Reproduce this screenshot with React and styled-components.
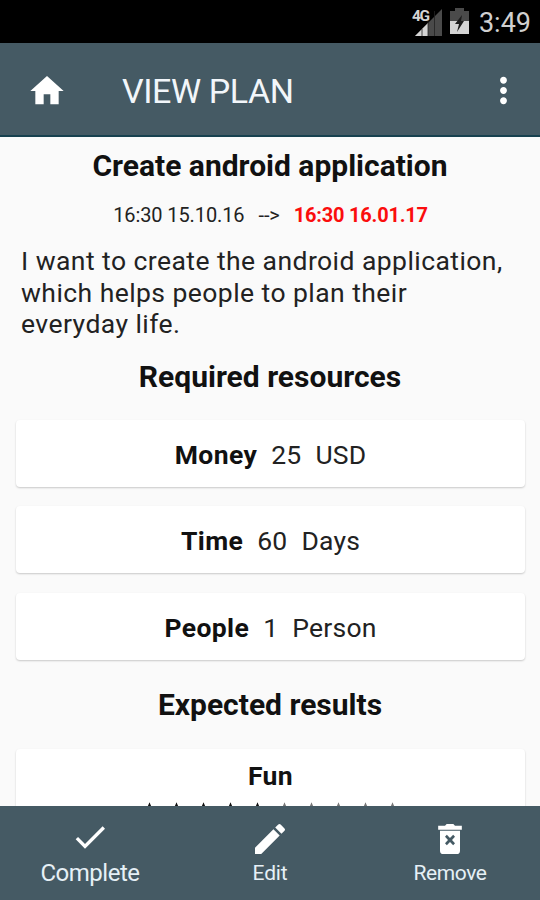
import React, { Component } from "react";
import styled, { createGlobalStyle } from "styled-components";
import {
  MdHome,
  MdMoreVert,
  MdCheck,
  MdEdit,
  MdStar
} from "react-icons/md";

const resources = [
  { name: "Money", amount: 25, unit: "USD" },
  { name: "Time", amount: 60, unit: "Days" },
  { name: "People", amount: 1, unit: "Person" }
];

const RATING = 5;
const MAX_RATING = 10;

class StatusBar extends Component {
  render() {
    return (
      <StatusContainer>
        <svg width="32" height="30" viewBox="-2 -2 32 30">
          <path d="M30 0V27H3z" fill="#4a4a4a" />
          <path d="M16 14V27H3z" fill="#d4d4d4" />
          <path d="M10 20V27M16 2V27M22.5 2V27" stroke="#222" strokeWidth="0.8" />
          <path d="M0 0h17v9L12 13H0z" fill="#000" />
          <text x="0" y="12" fill="#d4d4d4" fontSize="15.5" fontWeight="700" letterSpacing="-1.5">
            4G
          </text>
        </svg>
        <svg width="19" height="27" viewBox="0 0 19 27">
          <path d="M5 0h9v3h5v10H0V3h5z" fill="#4a4a4a" />
          <path d="M0 13h19v13H0z" fill="#d4d4d4" />
          <path d="M12 7L5 16h4l-2 8 7-11h-3z" fill="#1c1c1c" />
        </svg>
        <Clock>3:49</Clock>
      </StatusContainer>
    );
  }
}

class BottomBar extends Component {
  render() {
    return (
      <BottomContainer>
        <Action>
          <CheckIcon size={40} />
          <ActionLabel size={24} spacing={-0.5}>Complete</ActionLabel>
        </Action>
        <Action>
          <MdEdit size={40} />
          <ActionLabel size={21} spacing={-0.2}>Edit</ActionLabel>
        </Action>
        <Action>
          <svg width="40" height="40" viewBox="0 0 24 24" fill="currentColor">
            <path d="M4.9 4H9l1-1h4l1 1h4.1v2.4H4.9z" />
            <path
              fillRule="evenodd"
              d="M6 7h12v12a2 2 0 0 1-2 2H8a2 2 0 0 1-2-2zM9 10.6l1.8 2L9 14.6l1.1 1.1 1.9-1.9 1.9 1.9 1.1-1.1-1.8-2 1.8-2-1.1-1.1-1.9 1.9-1.9-1.9z"
            />
          </svg>
          <ActionLabel size={21} spacing={-0.4}>Remove</ActionLabel>
        </Action>
      </BottomContainer>
    );
  }
}

class App extends Component {
  render() {
    return (
      <Screen>
        <GlobalStyle />
        <StatusBar />
        <Header>
          <MdHome size={40} />
          <HeaderTitle>VIEW PLAN</HeaderTitle>
          <MdMoreVert size={41} />
        </Header>
        <Content>
          <Title>Create android application</Title>
          <Dates>
            <span>16:30 15.10.16</span>
            <span>--&gt;</span>
            <Deadline>16:30 16.01.17</Deadline>
          </Dates>
          <Description>
            I want to create the android application, which helps people to
            plan their everyday life.
          </Description>
          <Title>Required resources</Title>
          <Cards>
            {resources.map(({ name, amount, unit }) => (
              <Card key={name}>
                <Name>{name}</Name>
                <Value>{amount}</Value>
                <Value>{unit}</Value>
              </Card>
            ))}
          </Cards>
          <Title>Expected results</Title>
          <ResultCard>
            <Name>Fun</Name>
            <Stars>
              {Array.from({ length: MAX_RATING }, (_, i) => (
                <MdStar key={i} size={27} color={i < RATING ? "#111" : "#777"} />
              ))}
            </Stars>
          </ResultCard>
        </Content>
        <BottomBar />
      </Screen>
    );
  }
}

const GlobalStyle = createGlobalStyle`
  body {
    margin: 0;
    font-family: Roboto, "Liberation Sans", sans-serif;
  }
`;

const Screen = styled.div`
  display: flex;
  flex-direction: column;
  height: 900px;
  width: 540px;
  overflow: hidden;
  background-color: #fafafa;
  color: #111;
`;

const StatusContainer = styled.div`
  display: flex;
  flex: none;
  justify-content: flex-end;
  align-items: center;
  height: 43px;
  padding-right: 9px;
  box-sizing: border-box;
  background-color: #000;

  svg {
    margin-right: 8px;
  }
`;

const Clock = styled.span`
  color: #d0d0d0;
  font-size: 27px;
  margin-left: 2px;
  padding-top: 3px;
`;

const Header = styled.div`
  display: flex;
  flex: none;
  align-items: center;
  height: 94px;
  padding: 3px 16px 0 27px;
  box-sizing: border-box;
  background-color: #455a64;
  border-bottom: 2px solid #17414f;
  color: #fff;
`;

const HeaderTitle = styled.h1`
  flex: 1;
  margin: 0 0 0 55px;
  font-size: 34px;
  font-weight: 400;
  letter-spacing: -0.4px;
  color: #f2f6fa;
`;

const Content = styled.div`
  flex: 1;
  min-height: 0;
  overflow: hidden;
`;

const Title = styled.h2`
  margin: 0;
  padding-top: 11px;
  font-size: 30px;
  line-height: 36px;
  font-weight: 700;
  text-align: center;
`;

const Dates = styled.div`
  display: flex;
  justify-content: center;
  gap: 14px;
  margin-top: 19px;
  padding-left: 1px;
  font-size: 20px;
  line-height: 24px;
  letter-spacing: -0.1px;
  color: #222;
`;

const Deadline = styled.span`
  color: #fb0d0d;
  font-weight: 700;
  letter-spacing: -0.2px;
`;

const Description = styled.p`
  margin: 18px 21px 8px;
  font-size: 26.5px;
  line-height: 31.5px;
  letter-spacing: 0.44px;
  color: #222;
`;

const Cards = styled.div`
  display: flex;
  flex-direction: column;
  gap: 19.5px;
  margin: 25px 15px 16px 16px;
`;

const Card = styled.div`
  display: flex;
  justify-content: center;
  align-items: center;
  gap: 14px;
  height: 67px;
  padding-top: 2px;
  box-sizing: border-box;
  font-size: 26.5px;
  background-color: #fff;
  border-radius: 4px;
  box-shadow: 0 1px 2px rgba(0, 0, 0, 0.2);
`;

const ResultCard = styled(Card)`
  flex-direction: column;
  justify-content: flex-start;
  height: 120px;
  gap: 9px;
  margin: 26px 15px 0 16px;
  padding-top: 11px;
`;

const Name = styled.span`
  font-weight: 700;
  letter-spacing: 0.4px;
`;

const Value = styled.span`
  color: #222;
  letter-spacing: 0.2px;
`;

const Stars = styled.div`
  display: flex;
`;

const BottomContainer = styled.div`
  display: flex;
  flex: none;
  height: 94px;
  background-color: #455a64;
  color: #fff;
`;

const Action = styled.div`
  display: flex;
  flex: 1;
  flex-direction: column;
  align-items: center;
  padding-top: 13px;
`;

const CheckIcon = styled(MdCheck)`
  margin: -2px 0 2px;
`;

const ActionLabel = styled.span`
  color: #e6f0f6;
  font-size: ${props => props.size}px;
  line-height: 28px;
  letter-spacing: ${props => props.spacing || 0}px;
`;

export default App;
